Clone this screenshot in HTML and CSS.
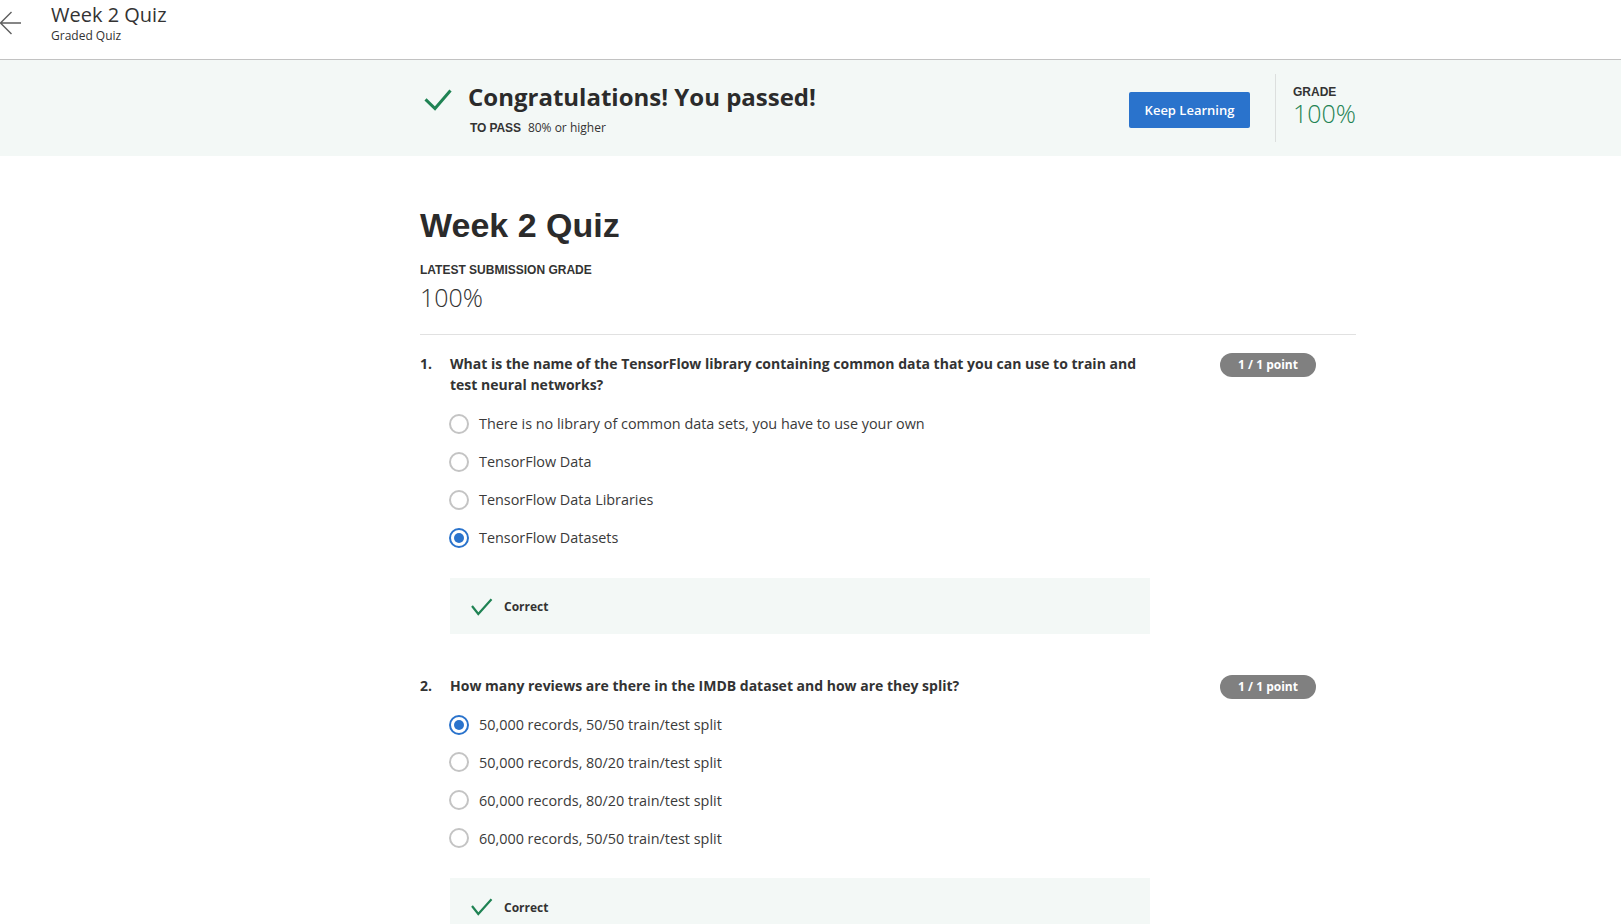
FILE: index.html
```html
<!DOCTYPE html>
<html lang="en">
<head>
<meta charset="utf-8">
<title>Week 2 Quiz</title>
<link rel="stylesheet" href="styles.css">
</head>
<body>
<header class="topbar">
  <svg class="back" width="22" height="26" viewBox="0 0 22 26" aria-hidden="true"><path d="M21 13 H0.5 M11.5 2 L0.5 13 L11.5 24" fill="none" stroke="#5f5f5f" stroke-width="1.4"/></svg>
  <div class="topbar-titles">
    <div class="topbar-title">Week 2 Quiz</div>
    <div class="topbar-sub">Graded Quiz</div>
  </div>
</header>

<section class="banner">
  <div class="banner-inner">
    <div class="banner-msg">
      <svg class="banner-check" width="28" height="22" viewBox="0 0 28 22" aria-hidden="true"><polyline points="1.5,10.3 11,19.5 26.5,1.5" fill="none" stroke="#1f8354" stroke-width="3"/></svg>
      <div class="banner-text">
        <div class="banner-title">Congratulations! You passed!</div>
        <div class="banner-pass"><span class="pass-label">TO PASS</span><span class="pass-value">80% or higher</span></div>
      </div>
    </div>
    <button class="btn-primary">Keep Learning</button>
    <div class="banner-divider"></div>
    <div class="banner-grade">
      <div class="grade-label">GRADE</div>
      <div class="grade-value">100%</div>
    </div>
  </div>
</section>

<main class="content">
  <h1 class="quiz-title">Week 2 Quiz</h1>
  <div class="latest-label">LATEST SUBMISSION GRADE</div>
  <div class="latest-value">100%</div>
  <hr class="rule">

  <div class="question">
    <div class="q-num">1.</div>
    <div class="q-body">
      <div class="q-text">What is the name of the TensorFlow library containing common data that you can use to train and test neural networks?</div>
      <div class="options">
        <div class="option"><span class="radio"></span><span class="opt-text">There is no library of common data sets, you have to use your own</span></div>
        <div class="option"><span class="radio"></span><span class="opt-text">TensorFlow Data</span></div>
        <div class="option"><span class="radio"></span><span class="opt-text">TensorFlow Data Libraries</span></div>
        <div class="option"><span class="radio checked"></span><span class="opt-text">TensorFlow Datasets</span></div>
      </div>
      <div class="feedback">
        <svg class="fb-check" width="22" height="18" viewBox="0 0 22 18" aria-hidden="true"><polyline points="1,8 7.3,16 20.5,1.3" fill="none" stroke="#1f8354" stroke-width="2.2"/></svg>
        <span class="fb-text">Correct</span>
      </div>
    </div>
    <div class="points">1 / 1 point</div>
  </div>

  <div class="question">
    <div class="q-num">2.</div>
    <div class="q-body">
      <div class="q-text">How many reviews are there in the IMDB dataset and how are they split?</div>
      <div class="options">
        <div class="option"><span class="radio checked"></span><span class="opt-text">50,000 records, 50/50 train/test split</span></div>
        <div class="option"><span class="radio"></span><span class="opt-text">50,000 records, 80/20 train/test split</span></div>
        <div class="option"><span class="radio"></span><span class="opt-text">60,000 records, 80/20 train/test split</span></div>
        <div class="option"><span class="radio"></span><span class="opt-text">60,000 records, 50/50 train/test split</span></div>
      </div>
      <div class="feedback">
        <svg class="fb-check" width="22" height="18" viewBox="0 0 22 18" aria-hidden="true"><polyline points="1,8 7.3,16 20.5,1.3" fill="none" stroke="#1f8354" stroke-width="2.2"/></svg>
        <span class="fb-text">Correct</span>
      </div>
    </div>
    <div class="points">1 / 1 point</div>
  </div>
</main>
</body>
</html>
```

FILE: styles.css
```css
html, body {
  margin: 0;
  padding: 0;
  overflow: hidden;
  background: #ffffff;
}

body {
  font-family: "Open Sans", "Liberation Sans", sans-serif;
  color: #333333;
}

/* top bar */
.topbar {
  height: 59px;
  border-bottom: 1px solid #c2c2c2;
  display: flex;
  align-items: flex-start;
}

.back {
  margin-top: 10px;
  flex: 0 0 auto;
}

.topbar-titles {
  margin-left: 29px;
  padding-top: 2px;
}

.topbar-title {
  font-size: 20px;
  line-height: 26px;
  color: #333333;
}

.topbar-sub {
  margin-top: 1px;
  font-size: 12px;
  line-height: 14px;
  color: #333333;
}

/* banner */
.banner {
  background: #f3f8f6;
  height: 96px;
}

.banner-inner {
  margin-left: 420px;
  width: 936px;
  height: 96px;
  display: flex;
  align-items: center;
}

.banner-msg {
  display: flex;
  align-items: flex-start;
  padding-left: 4px;
  padding-top: 1px;
  margin-right: auto;
}

.banner-check {
  margin-top: 8px;
  margin-right: 16px;
  flex: 0 0 auto;
}

.banner-title {
  font-size: 24px;
  line-height: 32px;
  font-weight: 700;
  color: #2b2b2b;
}

.banner-pass {
  margin-top: 5px;
  line-height: 16px;
  padding-left: 2px;
}

.pass-label {
  font-family: "Liberation Sans", Arial, sans-serif;
  font-weight: 700;
  font-size: 12px;
  letter-spacing: -0.1px;
  color: #333333;
  margin-right: 7px;
}

.pass-value {
  font-size: 12px;
  color: #333333;
}

.btn-primary {
  margin-top: 4px;
  height: 36px;
  width: 121px;
  border: none;
  border-radius: 2px;
  background: #2a73cc;
  color: #ffffff;
  font-family: "Open Sans", sans-serif;
  font-size: 13px;
  font-weight: 600;
  padding: 0;
}

.banner-divider {
  width: 1px;
  height: 68px;
  background: #dcdfde;
  margin-left: 25px;
  margin-right: 17px;
}

.banner-grade {
  margin-bottom: 4px;
}

.grade-label {
  font-family: "Liberation Sans", Arial, sans-serif;
  font-weight: 700;
  font-size: 12px;
  line-height: 14px;
  color: #333333;
}

.grade-value {
  font-size: 25px;
  line-height: 28px;
  font-weight: 300;
  color: #1f8354;
}

/* main content */
.content {
  margin-left: 420px;
  width: 936px;
  padding-top: 50px;
}

.quiz-title {
  margin: 0;
  font-family: "Liberation Sans", Arial, sans-serif;
  font-size: 34px;
  line-height: 39px;
  font-weight: 700;
  color: #2b2b2b;
}

.latest-label {
  margin-top: 18px;
  font-family: "Liberation Sans", Arial, sans-serif;
  font-weight: 700;
  font-size: 12px;
  line-height: 14px;
  color: #333333;
}

.latest-value {
  margin-top: 4px;
  font-size: 25px;
  line-height: 32px;
  font-weight: 300;
  color: #333333;
}

.rule {
  margin: 21px 0 0 0;
  border: none;
  border-top: 1px solid #e1e1e1;
  height: 0;
}

.question {
  display: flex;
  align-items: flex-start;
  margin-top: 41px;
}

.rule + .question {
  margin-top: 18px;
}

.q-num {
  width: 30px;
  flex: 0 0 30px;
  font-size: 14px;
  line-height: 21px;
  font-weight: 700;
  color: #333333;
}

.q-body {
  width: 700px;
  flex: 0 0 700px;
}

.q-text {
  font-size: 14px;
  line-height: 21px;
  font-weight: 700;
  color: #333333;
}

.options {
  margin-top: 10px;
}

.option {
  height: 37.9px;
  display: flex;
  align-items: center;
}

.radio {
  box-sizing: border-box;
  width: 20px;
  height: 20px;
  border-radius: 50%;
  border: 2px solid #c4c4c4;
  margin-left: -1px;
  margin-right: 10px;
  flex: 0 0 auto;
  display: flex;
  align-items: center;
  justify-content: center;
}

.radio.checked {
  border-color: #2a73cc;
}

.radio.checked::after {
  content: "";
  width: 10px;
  height: 10px;
  border-radius: 50%;
  background: #2a73cc;
}

.opt-text {
  font-size: 14.4px;
  line-height: 21px;
  color: #3a3a3a;
}

.feedback {
  box-sizing: border-box;
  margin-top: 21px;
  height: 56px;
  padding-top: 2px;
  background: #f3f8f6;
  display: flex;
  align-items: center;
  padding-left: 21px;
}

.fb-check {
  margin-right: 11px;
  flex: 0 0 auto;
}

.fb-text {
  font-size: 12px;
  font-weight: 700;
  color: #333333;
}

.points {
  margin-left: auto;
  margin-right: 40px;
  height: 24px;
  width: 96px;
  border-radius: 12px;
  background: #808080;
  color: #ffffff;
  font-size: 12px;
  font-weight: 700;
  line-height: 24px;
  text-align: center;
}
```
